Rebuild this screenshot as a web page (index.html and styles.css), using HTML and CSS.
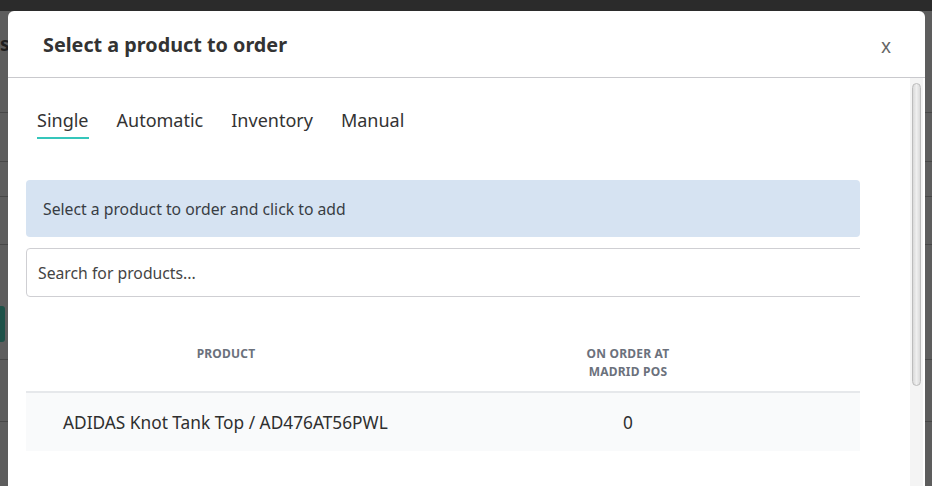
FILE: index.html
```html
<!DOCTYPE html>
<html>
<head>
<meta charset="utf-8">
<link rel="stylesheet" href="styles.css">
</head>
<body>
<div class="page">
  <div class="topbar"></div>
  <div class="prow prow-1"><span class="frag">st</span></div>
  <div class="prow prow-2"></div>
  <div class="prow prow-3"></div>
  <div class="prow prow-4"></div>
  <div class="prow prow-5"><div class="teal-btn"></div></div>
  <div class="prow prow-6"></div>
  <div class="prow prow-7"></div>
</div>

<div class="modal">
  <div class="modal-header">
    <h2 class="modal-title">Select a product to order</h2>
    <span class="close">x</span>
  </div>
  <div class="modal-body">
    <div class="tabs">
      <span class="tab active">Single</span>
      <span class="tab">Automatic</span>
      <span class="tab">Inventory</span>
      <span class="tab">Manual</span>
    </div>
    <div class="info">Select a product to order and click to add</div>
    <div class="search-wrap">
      <div class="search">Search for products...</div>
    </div>
    <div class="table">
      <div class="thead">
        <div class="th">Product</div>
        <div class="th">On order at<br>Madrid POS</div>
        <div class="th"></div>
      </div>
      <div class="trow">
        <div class="td td-name">ADIDAS Knot Tank Top / AD476AT56PWL</div>
        <div class="td td-num">0</div>
        <div class="td"></div>
      </div>
    </div>
    <div class="scrollbar"><div class="thumb"></div></div>
  </div>
</div>
</body>
</html>
```

FILE: styles.css
```css
* { box-sizing: border-box; }
html, body { margin: 0; padding: 0; }
body {
  width: 932px;
  height: 486px;
  overflow: hidden;
  background: #5a5a5a;
  font-family: "Noto Sans", "Open Sans", sans-serif;
  position: relative;
}
.page { display: flex; flex-direction: column; }
.topbar { height: 11px; background: #2b2b2b; }
.prow { border-bottom: 1px solid #474747; background: #5d5d5d; position: relative; }
.prow-1 { height: 102px; }
.prow-2 { height: 49px; }
.prow-3 { height: 35px; }
.prow-4 { height: 48px; }
.prow-5 { height: 115px; }
.prow-6 { height: 62px; }
.prow-7 { height: 80px; border-bottom: none; }
.frag {
  display: block;
  margin-top: 21px;
  font-weight: 700;
  font-size: 19px;
  line-height: 24px;
  color: #1e1e1e;
}
.teal-btn {
  width: 5px;
  height: 36px;
  margin-top: 61px;
  background: #1d5148;
  border-radius: 0 3px 3px 0;
}

.modal {
  position: absolute;
  left: 8px;
  top: 11px;
  width: 917px;
  height: 500px;
  background: #fff;
  border-radius: 6px 6px 0 0;
  overflow: hidden;
}
.modal-header {
  height: 67px;
  border-bottom: 1px solid #c9c9cd;
  display: flex;
  align-items: center;
  justify-content: space-between;
  padding: 0 34px 0 35px;
}
.modal-title {
  margin: 0;
  font-size: 19.8px;
  font-weight: 700;
  color: #333;
}
.close {
  font-size: 19px;
  color: #666;
  margin-top: 4px;
}
.modal-body {
  position: relative;
  padding: 0 65px 0 18px;
  height: 440px;
}
.tabs {
  display: flex;
  gap: 28px;
  padding-left: 11px;
  padding-top: 30px;
}
.tab {
  font-size: 18px;
  line-height: 24px;
  color: #333;
  padding-bottom: 5px;
  border-bottom: 2px solid transparent;
}
.tab.active { border-bottom-color: #35c6bb; }
.info {
  margin-top: 41px;
  height: 57px;
  background: #d6e3f2;
  border-radius: 4px;
  display: flex;
  align-items: center;
  padding: 0 17px;
  font-size: 15.75px;
  color: #383d44;
}
.search-wrap {
  margin-top: 11px;
  overflow: hidden;
}
.search {
  width: 850px;
  height: 49px;
  border: 1px solid #cfcfd3;
  border-radius: 4px;
  display: flex;
  align-items: center;
  padding-left: 11px;
  font-size: 15.75px;
  color: #444;
}
.table { margin-top: 36px; }
.thead, .trow {
  display: grid;
  grid-template-columns: 400px 404px 1fr;
}
.thead {
  height: 60px;
  border-bottom: 2px solid #e6e8eb;
  align-items: start;
  padding-top: 12px;
}
.th {
  text-align: center;
  font-size: 12px;
  font-weight: 700;
  line-height: 18px;
  text-transform: uppercase;
  color: #6b717c;
  letter-spacing: 0.2px;
}
.trow {
  height: 58px;
  background: #f9fafb;
  align-items: center;
}
.td { font-size: 17.3px; color: #2f2f2f; }
.td-name { padding-left: 37px; }
.td-num { text-align: center; }
.scrollbar {
  position: absolute;
  right: 2px;
  top: 0;
  width: 13px;
  bottom: 0;
  background: #f4f4f4;
  padding: 5px 2px 0 2px;
}
.thumb {
  height: 303px;
  border-radius: 6px;
  border: 1px solid #bcbcbc;
  background: linear-gradient(to right, #d9d9d9, #efefef 50%, #dadada);
}
```
